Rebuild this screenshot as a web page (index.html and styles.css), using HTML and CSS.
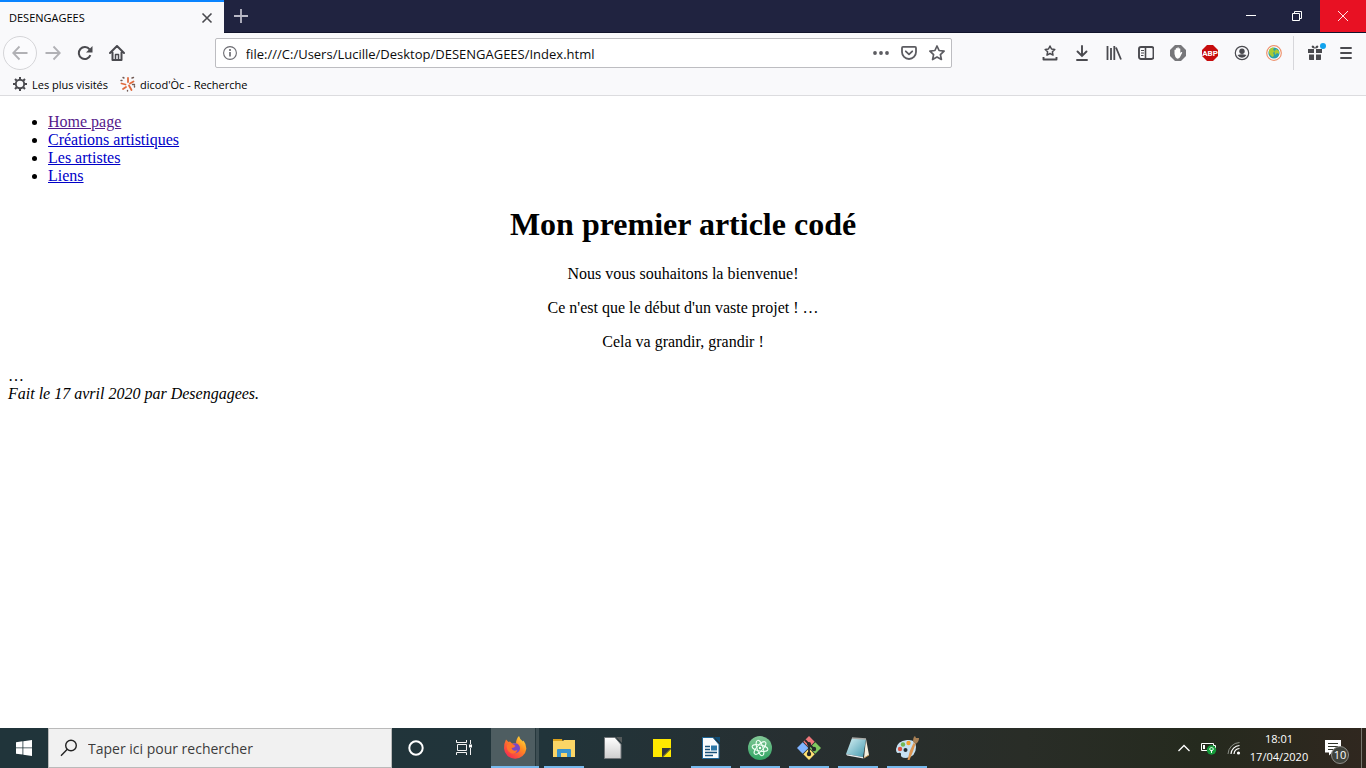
FILE: index.html
```html
<!DOCTYPE html>
<html lang="fr">
<head>
<meta charset="utf-8">
<title>DESENGAGEES</title>
<link rel="stylesheet" href="styles.css">
</head>
<body class="desktop">
<header class="browser">
  <div class="titlebar">
    <div class="tab">
      <span class="tab-title">DESENGAGEES</span>
      <button class="plain tab-close" aria-label="Fermer l'onglet"><svg width="12" height="12" viewBox="0 0 12 12"><path d="M1.5 1.5l9 9M10.5 1.5l-9 9" stroke="#4a4a4f" stroke-width="1.6"/></svg></button>
    </div>
    <button class="plain new-tab" aria-label="Nouvel onglet"><svg width="14" height="14" viewBox="0 0 14 14"><path d="M7 0v14M0 7h14" stroke="#b9b9c6" stroke-width="1.8"/></svg></button>
    <div class="window-controls">
      <button class="plain window-button" aria-label="Réduire"><svg width="10" height="10" viewBox="0 0 10 10"><path d="M0 4.5h10" stroke="#fff"/></svg></button>
      <button class="plain window-button" aria-label="Restaurer"><svg width="10" height="10" viewBox="0 0 10 10" fill="none" stroke="#fff"><path d="M.5 2.5h7v7h-7zM2.500 2.500v-2h7v7h-2"/></svg></button>
      <button class="plain window-button window-close" aria-label="Fermer"><svg width="10" height="10" viewBox="0 0 10 10"><path d="M0 0l10 10M10 0L0 10" stroke="#fff" stroke-width=".9"/></svg></button>
    </div>
  </div>

  <nav class="toolbar" aria-label="Navigation">
    <button class="plain back" aria-label="Précédent"><svg width="16" height="16" viewBox="0 0 16 16" fill="none" stroke="#b1b1b5" stroke-width="1.8"><path d="M15.500 8H1.500M7.500 1.500L1.200 8l6.300 6.500"/></svg></button>
    <button class="plain tool" aria-label="Suivant"><svg width="16" height="16" viewBox="0 0 16 16" fill="none" stroke="#b1b1b5" stroke-width="1.800"><path d="M.5 8h14M8.500 1.500L14.800 8l-6.300 6.500"/></svg></button>
    <button class="plain tool" aria-label="Actualiser"><svg width="16" height="16" viewBox="0 0 16 16"><path d="M13.400 10.200a6 6 0 1 1-.8-5.800" fill="none" stroke="#4a4a4f" stroke-width="2"/><path d="M15.500 1v6.500H9z" fill="#4a4a4f"/></svg></button>
    <button class="plain tool" aria-label="Accueil"><svg width="16" height="16" viewBox="0 0 16 16" fill="none" stroke="#4a4a4f" stroke-width="2" stroke-linejoin="round" stroke-linecap="round"><path d="M1 8l7-7 7 7M3.500 7.500V15h9V7.500"/><path d="M6.500 14V9.500h3V14" stroke-width="1.500"/></svg></button>
    <div class="spring"></div>
    <div class="address">
      <svg class="info" width="14" height="14" viewBox="0 0 14 14"><circle cx="7" cy="7" r="6.400" fill="none" stroke="#6a6a70" stroke-width="1.100"/><path d="M7 6v4.500" stroke="#5a5a60" stroke-width="1.500"/><circle cx="7" cy="3.900" r="1" fill="#5a5a60"/></svg>
      <input class="address-input" type="text" aria-label="Adresse" value="file:///C:/Users/Lucille/Desktop/DESENGAGEES/Index.html">
      <button class="plain address-tool" aria-label="Actions"><svg width="16" height="16" viewBox="0 0 16 16" fill="#5c5c61"><circle cx="2" cy="8" r="1.900"/><circle cx="8" cy="8" r="1.900"/><circle cx="14" cy="8" r="1.900"/></svg></button>
      <button class="plain address-tool" aria-label="Pocket"><svg width="16" height="16" viewBox="0 0 16 16" fill="none" stroke="#5c5c61" stroke-width="1.800" stroke-linecap="round" stroke-linejoin="round"><path d="M2 1.900h12q1 0 1 1V7A7 7 0 0 1 1 7V2.900q0-1 1-1z"/><path d="M4.800 6.300L8 9.300l3.200-3"/></svg></button>
      <button class="plain address-tool" aria-label="Marquer cette page"><svg width="16" height="16" viewBox="0 0 16 16" fill="none" stroke="#5c5c61" stroke-width="1.700" stroke-linejoin="round"><path d="M8 1l2.100 4.500 5 .6-3.700 3.500 1 4.900L8 12.100l-4.400 2.400 1-4.900L.9 6.100l5-.6z"/></svg></button>
    </div>
    <div class="spring"></div>
    <button class="plain tool" aria-label="Marque-pages"><svg width="16" height="16" viewBox="0 0 16 16" fill="none" stroke="#4a4a4f"><path d="M8 1l1.500 3 3.300.5-2.400 2.300.6 3.300-3-1.600-3 1.600.6-3.300-2.400-2.300L6.500 4z" stroke-width="1.500" stroke-linejoin="round"/><path d="M1.500 12v2.500h13V12" stroke-width="1.900" stroke-linejoin="round"/></svg></button>
    <button class="plain tool" aria-label="Téléchargements"><svg width="16" height="16" viewBox="0 0 16 16" fill="none" stroke="#4a4a4f" stroke-width="1.900" stroke-linecap="round"><path d="M8 1v9.500M3.500 6.500L8 11l4.500-4.500M3 15h10"/></svg></button>
    <button class="plain tool" aria-label="Bibliothèque"><svg width="16" height="16" viewBox="0 0 16 16" stroke="#4a4a4f" stroke-width="1.800"><path d="M1.500 1v14M5 3v12M8.300 1v14M10 2.500l5 12"/></svg></button>
    <button class="plain tool" aria-label="Panneaux latéraux"><svg width="16" height="16" viewBox="0 0 16 16" fill="none" stroke="#4a4a4f"><rect x="1" y="2" width="14.500" height="12" rx="2" stroke-width="1.900"/><path d="M7.500 2v12" stroke-width="1.600"/><path d="M3 5.500h3M3 8h3M3 10.500h2.500"/></svg></button>
    <button class="plain tool" aria-label="Bloqueur"><svg width="16" height="16" viewBox="0 0 16 16"><path d="M5 0h6l5 5v6l-5 5H5l-5-5V5z" fill="#77777a"/><path d="M4.500 9V5q.7-1 1.300 0V3.500q.8-1 1.500 0V2.700q.8-.8 1.500 0v1q.8-.8 1.500 0V8l1-1q1-.3.900.7l-2.400 4.800Q7.500 15 5.400 12z" fill="#fff"/></svg></button>
    <button class="plain tool" aria-label="Adblock Plus"><svg width="16" height="16" viewBox="0 0 16 16"><path d="M5 0h6l5 5v6l-5 5H5l-5-5V5z" fill="#c70d0d"/><text class="abp" x="8" y="11" text-anchor="middle">ABP</text></svg></button>
    <button class="plain tool" aria-label="Compte"><svg width="16" height="16" viewBox="0 0 16 16"><circle cx="8" cy="8" r="6.700" fill="none" stroke="#4a4a4f" stroke-width="1.200"/><circle cx="8" cy="6.200" r="2.700" fill="#4a4a4f"/><path d="M3.500 10q4.500-1.500 9 0-1.500 2.700-4.500 2.700T3.500 10z" fill="#4a4a4f"/></svg></button>
    <button class="plain tool" aria-label="Globe"><svg width="16" height="16" viewBox="0 0 16 16"><circle cx="8" cy="8" r="7.300" fill="#fff" stroke="#ee936f" stroke-width="1.200"/><circle cx="8" cy="8" r="5.600" fill="#2b9eaa"/><path d="M3 5q3-3.500 5-2l-1 2 2 1-2 2 1 2-1 2q-3-1-4-4zM10 4l3 2v3l-2-1-2 2-.5-3z" fill="#a9ca32"/></svg></button>
    <span class="separator"></span>
    <button class="plain tool gift" aria-label="Nouveautés"><svg width="20" height="20" viewBox="0 0 20 20"><path d="M2 6h6v4H2zM10 6h6v4h-6zM3 11.500h5V17H3.500L3 16.500zM10 11.500h5v5l-.5.500H10z" fill="#4a4a4f"/><path d="M9 5.500Q5 5 5.800 3 7.500 1.500 9 5q1.500-3.500 3.200-2Q13 5 9 5.500" fill="#4a4a4f"/><circle cx="17" cy="3" r="3" fill="#11a3ee"/></svg></button>
    <button class="plain tool" aria-label="Menu"><svg width="14" height="14" viewBox="0 0 14 14" stroke="#4a4a4f" stroke-width="1.900" stroke-linecap="round"><path d="M2 2h10M2 7h10M2 12h10"/></svg></button>
  </nav>

  <div class="bookmarks">
    <button class="plain bookmark"><svg width="16" height="16" viewBox="0 0 16 16" fill="none" stroke="#4a4a4f"><circle cx="8" cy="8" r="4.200" stroke-width="1.900"/><path d="M8 1v2.500M8 12.500V15M1 8h2.500M12.500 8H15M3 3l1.800 1.800M11.200 11.200L13 13M13 3l-1.800 1.800M4.800 11.200L3 13" stroke-width="2"/></svg><span>Les plus visités</span></button>
    <button class="plain bookmark"><svg width="16" height="16" viewBox="0 0 16 16" fill="none" stroke="#e06a3d" stroke-width="1.800" stroke-linecap="round"><path d="M8 2v4M1.500 7.500l4 1M3 13l3-2M9 9.500l2.500 4.500M10 7.500l3.500-2"/><path d="M3 1.500l1 .5M12 2l1.500-.5M1 4.500h1M14.500 10v1M7.500 14.500v.5M12.500 8.500h2" stroke="#725b54" stroke-width="1.400"/></svg><span>dicod'Òc - Recherche</span></button>
  </div>
</header>

<main class="page">
  <ul class="menu">
    <li><a class="visited" href="#home">Home page</a></li>
    <li><a href="#creations">Créations artistiques</a></li>
    <li><a href="#artistes">Les artistes</a></li>
    <li><a href="#liens">Liens</a></li>
  </ul>
  <article class="article">
    <h1>Mon premier article codé</h1>
    <p>Nous vous souhaitons la bienvenue!</p>
    <p>Ce n'est que le début d'un vaste projet ! …</p>
    <p>Cela va grandir, grandir !</p>
  </article>
  <footer>…<address>Fait le 17 avril 2020 par Desengagees.</address></footer>
</main>

<div class="taskbar">
  <button class="plain start" aria-label="Démarrer"><svg width="16" height="16" viewBox="0 0 16 16" fill="#fff"><path d="M0 2.200l6.500-.9v6.200H0zM7.300 1.200L16 0v7.500H7.300zM0 8.300h6.500v6.300L0 13.700zM7.300 8.300H16V16l-8.700-1.200z"/></svg></button>
  <label class="search">
    <svg width="18" height="18" viewBox="0 0 18 18" fill="none" stroke="#222" stroke-width="1.400"><circle cx="11" cy="6.500" r="5.300"/><path d="M7.300 10.300L1 16.700"/></svg>
    <input class="search-input" type="text" placeholder="Taper ici pour rechercher" aria-label="Rechercher">
  </label>
  <button class="plain shell" aria-label="Cortana"><svg width="16" height="16" viewBox="0 0 16 16"><circle cx="8" cy="8" r="6.700" fill="none" stroke="#fff" stroke-width="2"/></svg></button>
  <button class="plain shell" aria-label="Applications actives"><svg width="16" height="16" viewBox="0 0 16 16" fill="none" stroke="#f2f2f2"><path d="M.5 0v2.500h10V0M1.500 4.500h9v6h-9zM.5 15v-2.500h10V15M14.500 0v4M14.500 8v7"/><path d="M13 4.500h3v3h-3z" fill="#fff" stroke="none"/></svg></button>
  <div class="apps">
    <button class="plain app active" aria-label="Firefox"><svg width="24" height="24" viewBox="0 0 24 24"><defs><linearGradient id="fox" x1="1" y1="0" x2=".2" y2="1"><stop offset="0" stop-color="#fff044"/><stop offset=".45" stop-color="#ff8b20"/><stop offset="1" stop-color="#f72355"/></linearGradient></defs><path d="M1 12.500Q1 7 3 3.500L5.500 6 7 5.500l2 2q2-.5 4 0Q13 3 16 0q.5 3 4 5.500l.5-1q3 4 2.800 8.500A11.200 11 0 0 1 1 12.500z" fill="url(#fox)"/><circle cx="12" cy="12.300" r="5" fill="#7947c6"/><path d="M4 9q4-3 8.500 1-1 2-4 2 1 4 6 2-2 5-7 3Q3 14 4 9z" fill="#ff742b"/></svg></button>
    <button class="plain app running" aria-label="Explorateur de fichiers"><svg width="24" height="24" viewBox="0 0 24 24"><path d="M1 3h9l1 3H1z" fill="#dda21c"/><path d="M1 5h10l1-1h11v17H1z" fill="#fbd566"/><path d="M5 21v-7q0-1 1-1h12q1 0 1 1v7h-4v-4H9v4z" fill="#3993cc"/></svg></button>
    <button class="plain app" aria-label="LibreOffice"><svg width="24" height="24" viewBox="0 0 24 24"><defs><linearGradient id="sheet" x2="0" y2="1"><stop stop-color="#fff"/><stop offset="1" stop-color="#cecece"/></linearGradient></defs><path d="M3.500 1.500H14l6 7v14H3.500z" fill="url(#sheet)" stroke="#73777a"/><path d="M15 1h6v6z" fill="#555a5b"/></svg></button>
    <button class="plain app" aria-label="Pense-bêtes"><svg width="24" height="24" viewBox="0 0 24 24"><path d="M3 3h18v9l-9 9H3z" fill="#ffe900"/><path d="M12 12h9l-9 9z" fill="#34383a"/><path d="M21 13v8h-8z" fill="#ffe900"/></svg></button>
    <button class="plain app running" aria-label="LibreOffice Writer"><svg width="24" height="24" viewBox="0 0 24 24"><path d="M3.500 1.500H14l6 7v14H3.500z" fill="#f8fbfd" stroke="#1c6596"/><path d="M15 1h6v6z" fill="#104e77"/><path d="M6 10.500h5M6 13.500h5M6 16.500h12M6 19.500h8" stroke="#17517a" stroke-width="1.300"/><path d="M12 9.500h6v5h-6z" fill="#2b77a8"/></svg></button>
    <button class="plain app running" aria-label="Atom"><svg width="24" height="24" viewBox="0 0 24 24"><defs><linearGradient id="atom" x2="0" y2="1"><stop stop-color="#83c897"/><stop offset="1" stop-color="#31a463"/></linearGradient></defs><circle cx="12" cy="12" r="12" fill="url(#atom)"/><g fill="none" stroke="#effff4" stroke-width="1"><ellipse cx="12" cy="12" rx="8" ry="3" transform="rotate(12 12 12)"/><ellipse cx="12" cy="12" rx="8" ry="3" transform="rotate(72 12 12)"/><ellipse cx="12" cy="12" rx="8" ry="3" transform="rotate(132 12 12)"/></g><circle cx="12" cy="12" r="1.200" fill="#fff"/></svg></button>
    <button class="plain app running" aria-label="Git"><svg width="24" height="24" viewBox="0 0 24 24"><path d="M12 0l5.700 5.700L12 11.400 6.300 5.700z" fill="#ef767a"/><path d="M5.700 6.300l5.700 5.700-5.700 5.700L0 12z" fill="#80b3ff"/><path d="M18.300 6.300L24 12l-5.700 5.700-5.700-5.700z" fill="#80c95f"/><path d="M12 12.600l5.700 5.700L12 24l-5.700-5.700z" fill="#ffe173"/><path d="M8 4l4 4v10M12 8l5 5" stroke="#23282b" stroke-width="1.800" fill="none"/><circle cx="12" cy="8" r="2" fill="#23282b"/><circle cx="12" cy="18" r="2.200" fill="#23282b"/><circle cx="17" cy="13" r="2.200" fill="#23282b"/></svg></button>
    <button class="plain app running" aria-label="Bloc-notes"><svg width="24" height="24" viewBox="0 0 24 24"><defs><linearGradient id="note" x2="1" y2="1"><stop stop-color="#d9f2f5"/><stop offset="1" stop-color="#4399ae"/></linearGradient></defs><path d="M20 3l3 16-5 3z" fill="#f4efde"/><path d="M6 2l14 1-3 18-17-3z" fill="url(#note)"/><path d="M0 18l17 3 .5 1.500L1 19.500z" fill="#e8edef"/><path d="M6 2l14 1" stroke="#a9a9a6" stroke-width="1.500"/><path d="M18 22l5-3" stroke="#c69a58"/></svg></button>
    <button class="plain app running" aria-label="Paint"><svg width="24" height="24" viewBox="0 0 24 24"><path d="M1 13Q2 5 12 4q9-1 9 7 0 10-10 11-6 0-5-4 0-2-3-1-2 0-2-4z" fill="#c6e1f2"/><circle cx="5" cy="13" r="2.200" fill="#dc5544"/><circle cx="8" cy="8.500" r="2.200" fill="#72b753"/><circle cx="13.500" cy="7" r="2.200" fill="#f4a02c"/><circle cx="10.500" cy="14" r="2" fill="#222e33"/><path d="M12.500 24Q14 15 18.500 7l2 1Q18 16 14.500 24z" fill="#db9653"/><path d="M18 6q0-5 2-6l1 2 3 0q0 4-3.500 6z" fill="#a88055"/></svg></button>
  </div>
  <div class="tray">
    <button class="plain tray-button" aria-label="Icônes cachées"><svg width="12" height="8" viewBox="0 0 12 8"><path d="M.5 7L6 1.500 11.500 7" fill="none" stroke="#fff" stroke-width="1.300"/></svg></button>
    <svg class="battery" width="16" height="16" viewBox="0 0 16 16"><path d="M.5 3.500h12v7H.5zM13 5.500h1.500v3" fill="none" stroke="#fff"/><path d="M2 5h2v4H2z" fill="#fff"/><circle cx="10.500" cy="10" r="4.700" fill="#159c3b"/><path d="M10.500 7l2 2-2 2.500-2-2.500zM10.500 10v3" stroke="#fff" fill="none"/></svg>
    <svg class="wifi" width="14" height="14" viewBox="0 0 14 14" fill="none"><path d="M1 13A12 12 0 0 1 12.500 1.500" stroke="#8d9189"/><path d="M4 13a9 9 0 0 1 8.500-8.500M7 13a6 6 0 0 1 5.500-5.500" stroke="#fff" stroke-width="1.200"/><circle cx="11.500" cy="12" r="1.600" fill="#fff"/></svg>
    <div class="clock"><time>18:01</time><span>17/04/2020</span></div>
    <button class="plain notifications" aria-label="10 notifications"><svg width="16" height="16" viewBox="0 0 16 16"><path d="M0 0h16v12.500H7L4 15.500v-3H0z" fill="#fff"/><path d="M3 3.500h10M3 6.500h10M3 9.500h6" stroke="#30342a"/></svg><span class="badge">10</span></button>
  </div>
  <span class="show-desktop"></span>
</div>
</body>
</html>
```
FILE: styles.css
```css
* { box-sizing: border-box; }

.desktop {
  display: flex;
  flex-direction: column;
  min-height: 100vh;
  margin: 0;
  background: #fff;
  color: #000;
  font-family: "Open Sans", "Noto Sans", sans-serif;
  font-size: 11px;
}

.plain {
  display: flex;
  align-items: center;
  justify-content: center;
  flex: none;
  margin: 0;
  padding: 0;
  border: 0;
  background: none;
  color: inherit;
  font: inherit;
}

svg { display: block; flex: none; }

/* Browser frame */
.browser { background: #f9f9fb; border-bottom: 1px solid #dcdcdf; }
.titlebar { display: flex; height: 33px; background: #202340; border-bottom: 1px solid #11142c; }
.tab {
  display: flex;
  align-items: center;
  justify-content: space-between;
  width: 224px;
  height: 33px;
  padding: 0 11px 0 9px;
  border-top: 2px solid #0a84ff;
  background: #f9f9fb;
}
.new-tab { width: 34px; }
.window-controls { display: flex; margin-left: auto; }
.window-button { width: 46px; height: 32px; }
.window-close { background: #e81123; }

.toolbar { display: flex; align-items: center; height: 40px; padding: 0 4px 0 3px; }
.back { width: 34px; height: 34px; border: 1px solid #d5d5d8; border-radius: 50%; background: #fbfbfd; }
.tool { width: 32px; height: 32px; }
.spring { flex: 10 1 0; }
.address {
  display: flex;
  align-items: center;
  flex: 89 1 0;
  min-width: 0;
  height: 30px;
  padding: 0 0 0 7px;
  border: 1px solid #bdbdc1;
  border-radius: 2px;
  background: #fff;
}
.address-input {
  flex: 1;
  min-width: 0;
  margin-left: 9px;
  padding: 2px 0 0;
  border: 0;
  outline: 0;
  background: none;
  color: #0c0c0d;
  font: 13px "Open Sans", "Noto Sans", sans-serif;
}
.address-tool { width: 28px; height: 28px; }
.abp { fill: #fff; font: bold 8px Roboto, sans-serif; }
.separator { width: 1px; height: 34px; margin: 0 4px 0 3px; background: #d7d7db; }
.gift { padding-left: 4px; }

.bookmarks { display: flex; align-items: center; gap: 12px; height: 22px; padding: 0 12px; }
.bookmark { gap: 4px; }

/* Document */
.page { flex: 1; padding: 1px 8px 0; font: 16px/18px "Liberation Serif", serif; }
.page a { color: #0000c8; }
.page a.visited { color: #551a8b; }
.menu { margin: 16px 0 20px; padding-left: 40px; }
.article { text-align: center; }
.article h1 { margin: 0 0 22px; font-size: 32px; line-height: 38px; }
.article p { margin: 0 0 16px; }

/* Taskbar */
.taskbar {
  display: flex;
  height: 40px;
  background: linear-gradient(90deg, #20343a 0%, #21343a 40%, #272f31 58%, #292d27 75%, #252a1e 88%, #30271f 100%);
  color: #fff;
}
.start { width: 48px; }
.search {
  display: flex;
  align-items: center;
  width: 344px;
  padding-left: 11px;
  border: 1px solid #bababa;
  background: #f1f1f1;
}
.search-input {
  flex: 1;
  min-width: 0;
  margin-left: 10px;
  padding: 0;
  border: 0;
  outline: 0;
  background: none;
  font: 14px "Open Sans", "Noto Sans", sans-serif;
}
.search-input::placeholder { color: #3b3b3b; opacity: 1; }
.shell { width: 48px; }
.apps { display: flex; gap: 1px; margin-left: 3px; }
.app { width: 48px; height: 40px; background: no-repeat center bottom / 40px 2px; }
.running { background-image: linear-gradient(#76b9ed, #76b9ed); }
.active {
  padding-top: 2px;
  border-bottom: 2px solid #76b9ed;
  background: linear-gradient(90deg, #4e5d61 44px, #26383d 44px, #26383d 45px, #3d4e53 45px);
}
.tray { display: flex; align-items: center; margin-left: auto; }
.tray-button { width: 24px; height: 40px; }
.battery { margin-left: 5px; }
.wifi { margin-left: 10px; }
.clock { display: flex; flex-direction: column; align-items: center; width: 76px; line-height: 18px; }
.notifications { position: relative; width: 44px; height: 40px; padding-right: 12px; }
.badge {
  position: absolute;
  top: 18px;
  left: 14px;
  width: 18px;
  height: 18px;
  border: 1px solid #8d8d89;
  border-radius: 50%;
  background: #40433c;
  line-height: 16px;
  text-align: center;
}
.show-desktop { width: 5px; border-left: 1px solid #77776f; }
```
